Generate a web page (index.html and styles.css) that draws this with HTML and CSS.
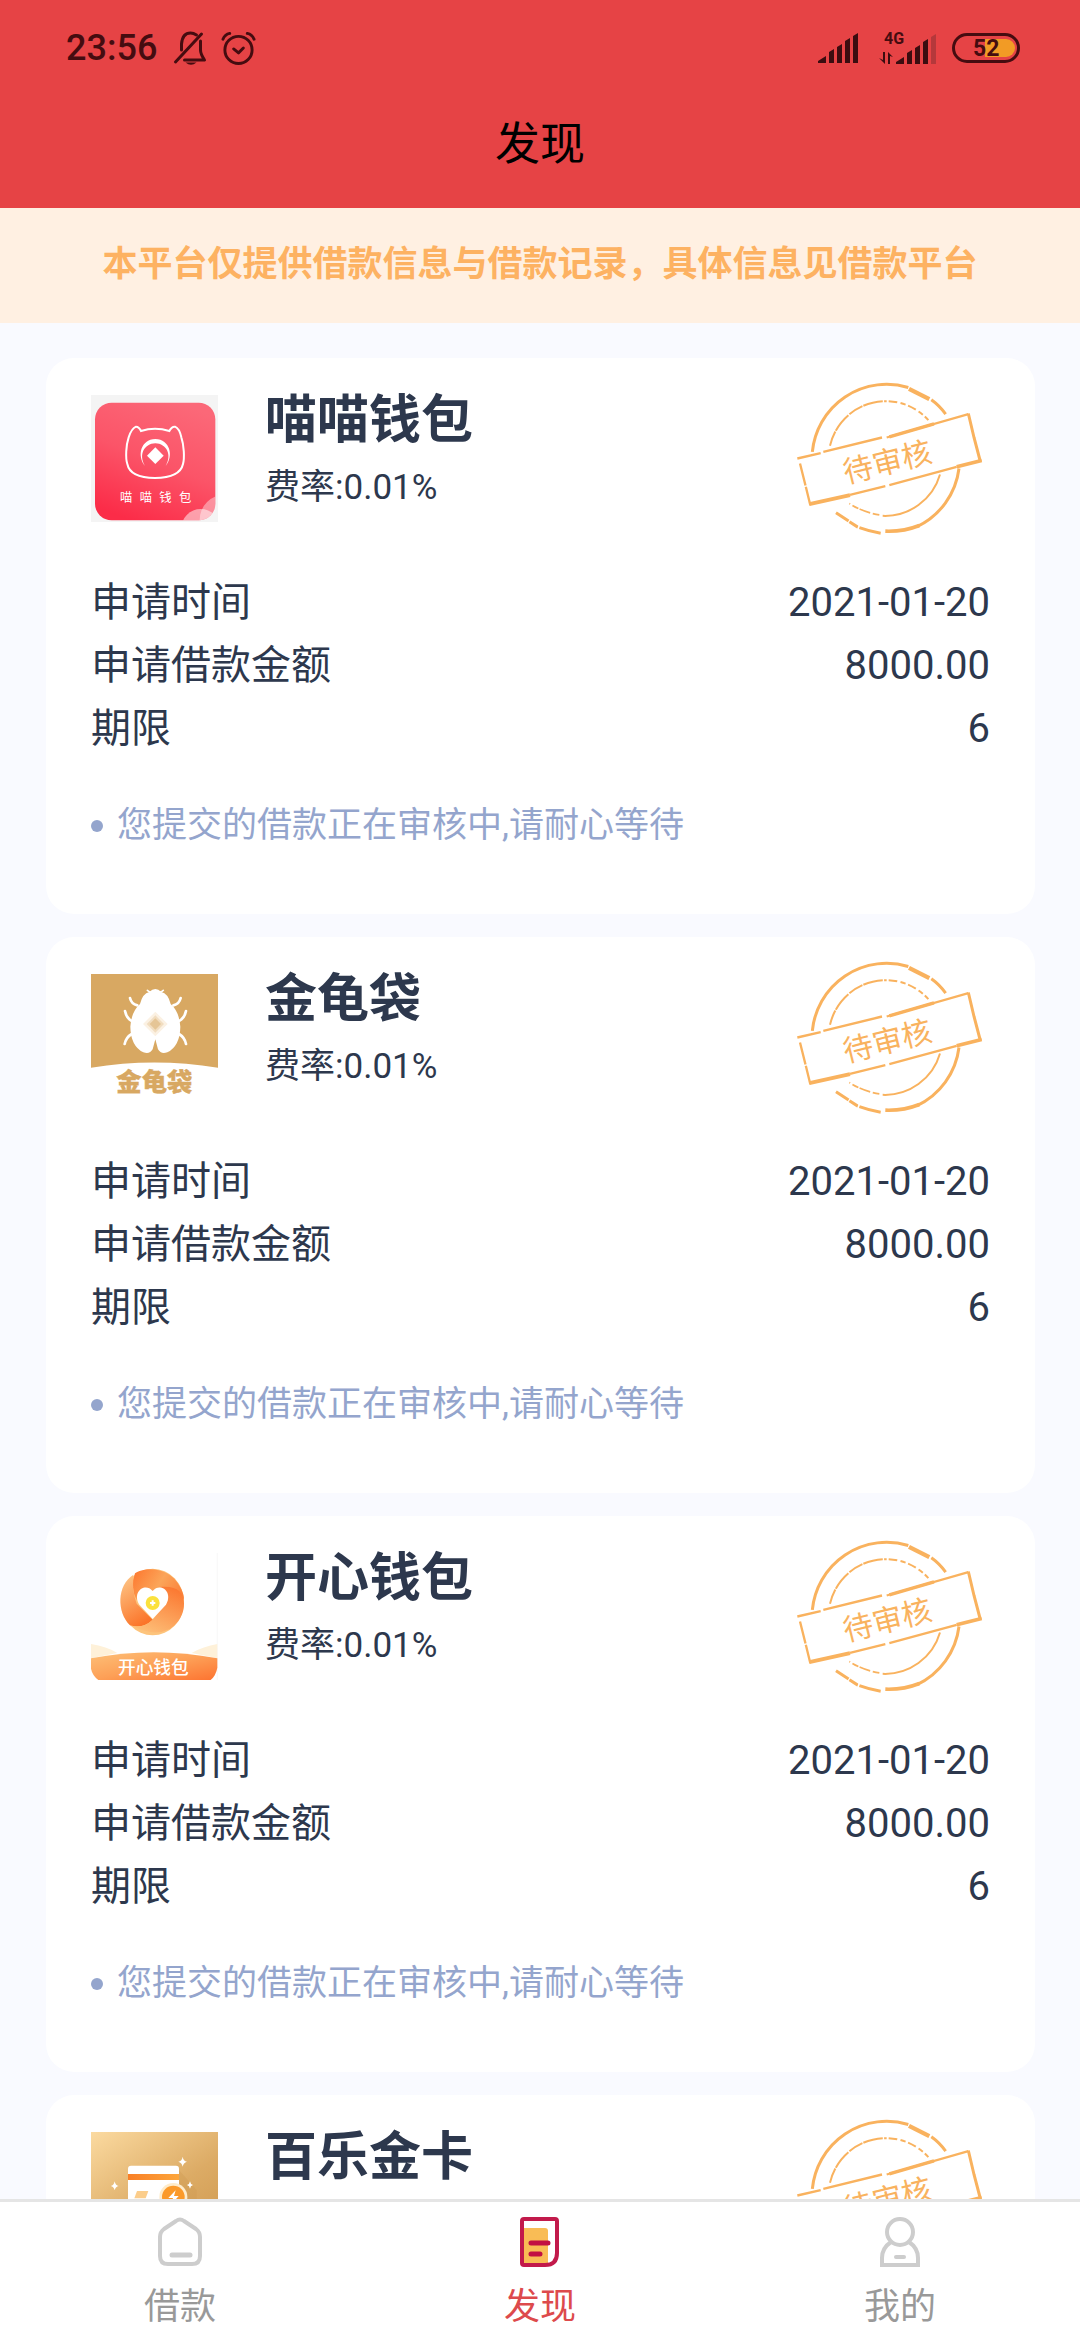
FILE: index.html
```html
<!DOCTYPE html>
<html lang="zh-CN">
<head>
<meta charset="utf-8">
<meta name="viewport" content="width=device-width, initial-scale=1">
<title>发现</title>
<link rel="stylesheet" href="styles.css">
</head>
<body>
<svg class="defs" aria-hidden="true">
  <defs>
    <g id="stamp" fill="none" stroke="#f9b25e">
      <path d="M157 305A224 224 0 0 1 445 112" stroke-width="9"/>
      <path d="M447 116L508 147" stroke-width="13"/>
      <path d="M514 149Q538 166 557 192" stroke-width="9"/>
      <path d="M597 355A224 224 0 0 1 470 530" stroke-width="9"/>
      <path d="M478 526Q430 545 376 543" stroke-width="11"/>
      <path d="M362 549Q325 543 292 530L228 488" stroke-width="9" stroke-dasharray="66 5 30 3"/>
      <path d="M210 287A172 172 0 0 1 380 153" stroke-width="6" stroke-dasharray="46 3 60 4"/>
      <path d="M386 153A172 172 0 0 1 505 210" stroke-width="6" stroke-dasharray="26 10 16 8"/>
      <path d="M540 373A172 172 0 0 1 368 497" stroke-width="6"/>
      <path d="M358 494Q310 487 268 460" stroke-width="5" stroke-dasharray="20 8 34 4"/>
      <path d="M112 325L182 309M190 305L366 262M380 262L625 192" stroke-width="7"/>
      <path d="M388 260L522 221" stroke-width="10"/>
      <path d="M625 190L642 262L661 334" stroke-width="9"/>
      <path d="M120 340L138 412L151 465" stroke-width="7" stroke-dasharray="68 4"/>
      <path d="M148 462L270 435" stroke-width="12"/>
      <path d="M270 434L376 408M388 405L590 350" stroke-width="7"/>
      <path d="M590 350L665 331" stroke-width="11"/>
    </g>
  </defs>
</svg>

<div class="app">
  <header class="topbar">
    <div class="status">
      <span class="clock">23:56</span>
      <svg class="status-icon" viewBox="0 0 34 36" aria-hidden="true">
        <g fill="none" stroke="#450c10" stroke-width="3" stroke-linecap="round" stroke-linejoin="round">
          <path d="M2 32L28 4"/>
          <path d="M8 20V14Q9 3 17 3Q20 3 23 5M27 11V20Q27 24 31 30H11"/>
        </g>
        <path d="M12 32.500H23Q17.500 37 12 32.500Z" fill="#450c10"/>
      </svg>
      <svg class="status-icon" viewBox="0 0 36 36" aria-hidden="true">
        <g fill="none" stroke="#450c10" stroke-width="3" stroke-linecap="round" stroke-linejoin="round">
          <circle cx="18" cy="20" r="14"/>
          <path d="M13 19L18 23L23 18M2 9Q4 4 9 3M27 3Q32 4 34 9"/>
        </g>
      </svg>
      <span class="spacer"></span>
      <svg class="signal" viewBox="0 0 40 32" aria-hidden="true">
        <path d="M0 31V29L8 24V31ZM11 31V20L16 17V31ZM19 31V15L24 12V31ZM27 31V9L32 6V31ZM35 31V4L40 1V31Z" fill="#3b0d10"/>
      </svg>
      <svg class="signal-data" viewBox="0 0 58 36" aria-hidden="true">
        <text x="5" y="14" class="network">4G</text>
        <path d="M0 28L4 30V22H6V34ZM9 22L14 27L11 26V34H9Z" fill="#3b0d10"/>
        <path d="M17 34V32L25 27V34ZM28 34V23L33 20V34ZM36 34V18L41 15V34ZM44 34V12L49 9V34Z" fill="#3b0d10"/>
        <path d="M52 34V7L57 4V34Z" fill="#b5383b"/>
      </svg>
      <svg class="battery" viewBox="0 0 68 30" role="img" aria-label="52%">
        <path d="M33 6H54A9 9 0 0 1 54 24H33Z" fill="#f29b25"/>
        <rect x="1.500" y="1.500" width="65" height="27" rx="13.500" fill="none" stroke="#450c10" stroke-width="3"/>
        <text x="21" y="23" class="level">52</text>
      </svg>
    </div>
    <h1 class="title">发现</h1>
  </header>

  <p class="notice">本平台仅提供借款信息与借款记录，具体信息见借款平台</p>

  <main class="list">
    <article class="card">
      <div class="head">
        <svg class="logo" viewBox="153 135 381 381" aria-hidden="true">
          <defs>
            <linearGradient id="pink" x1="0.700" y1="0" x2="0.300" y2="1">
              <stop offset="0" stop-color="#fb6878"/><stop offset="0.500" stop-color="#fb5468"/><stop offset="1" stop-color="#fb2c48"/>
            </linearGradient>
            <clipPath id="pinkClip"><rect x="165" y="158" width="361" height="353" rx="50"/></clipPath>
          </defs>
          <path d="M153 135H534V516H153Z" fill="#f4f4f4"/>
          <rect x="165" y="158" width="361" height="353" rx="50" fill="url(#pink)"/>
          <g clip-path="url(#pinkClip)" fill="#fff">
            <circle cx="555" cy="510" r="76" fill-opacity="0.400"/>
            <circle cx="482" cy="535" r="58" fill-opacity="0.500"/>
          </g>
          <path d="M303 243Q345 230 388 243Q395 229 405 230Q418 235 424 262C432 285 434 325 429 342Q420 383 345 384Q270 383 262 342C256 325 258 285 266 262Q275 235 288 230Q297 230 303 243Z" fill="none" stroke="#fff" stroke-width="6"/>
          <path d="M315 348C290 318 302 268 346 267C390 268 402 318 377 348C397 315 380 281 346 280C312 281 295 315 315 348Z" fill="#fff"/>
          <path d="M346 292L371 317L346 342L321 317Z" fill="#fff"/>
          <text x="240 299 358 417" y="456" class="logo-pink">喵喵钱包</text>
        </svg>
        <div class="info">
          <h2 class="name">喵喵钱包</h2>
          <p class="rate">费率:0.01%</p>
        </div>
        <svg class="stamp" viewBox="105 90 570 470"><use href="#stamp"/><text class="stamp-text" x="382" y="368" transform="rotate(-14 382 335)">待审核</text></svg>
      </div>
      <dl class="facts">
        <div class="fact"><dt>申请时间</dt><dd>2021-01-20</dd></div>
        <div class="fact"><dt>申请借款金额</dt><dd>8000.00</dd></div>
        <div class="fact"><dt>期限</dt><dd>6</dd></div>
      </dl>
      <p class="hint">您提交的借款正在审核中,请耐心等待</p>
    </article>

    <article class="card">
      <div class="head">
        <svg class="logo" viewBox="33 42 381 381" aria-hidden="true">
          <path d="M33 42H414V323Q223 292 33 323Z" fill="#d8a862"/>
          <g fill="none" stroke="#fff" stroke-width="8" stroke-linecap="round">
            <path d="M150 114Q154 132 172 136M302 114Q298 132 280 136M135 153Q140 178 160 185M318 153Q313 178 292 185M155 222Q138 232 134 252M297 222Q314 232 318 252"/>
            <path d="M202 91Q206 96 212 96M250 91Q246 96 240 96" stroke-width="5"/>
          </g>
          <path d="M208 96Q226 78 244 96Q264 100 272 132Q298 155 301 200Q300 258 262 277Q243 284 234 268L226 238L218 268Q209 284 190 277Q152 258 151 200Q154 155 180 132Q188 100 208 96Z" fill="#fff"/>
          <path d="M226 155L263 192L226 229L189 192Z" fill="#fbf1e3"/>
          <path d="M226 166L252 192L226 218L200 192Z" fill="#f1ddc0"/>
          <path d="M226 175L243 192L226 209L209 192Z" fill="#e5c596"/>
          <text x="109" y="393" class="logo-gold">金龟袋</text>
        </svg>
        <div class="info">
          <h2 class="name">金龟袋</h2>
          <p class="rate">费率:0.01%</p>
        </div>
        <svg class="stamp" viewBox="105 90 570 470"><use href="#stamp"/><text class="stamp-text" x="382" y="368" transform="rotate(-14 382 335)">待审核</text></svg>
      </div>
      <dl class="facts">
        <div class="fact"><dt>申请时间</dt><dd>2021-01-20</dd></div>
        <div class="fact"><dt>申请借款金额</dt><dd>8000.00</dd></div>
        <div class="fact"><dt>期限</dt><dd>6</dd></div>
      </dl>
      <p class="hint">您提交的借款正在审核中,请耐心等待</p>
    </article>

    <article class="card">
      <div class="head">
        <svg class="logo" viewBox="33 38 381 381" aria-hidden="true">
          <defs>
            <linearGradient id="swirlTop" x1="0" y1="0.300" x2="1" y2="0.700">
              <stop offset="0" stop-color="#fd7e35"/><stop offset="0.500" stop-color="#fba559"/><stop offset="1" stop-color="#fb813a"/>
            </linearGradient>
            <linearGradient id="swirlLeft" x1="0.200" y1="0" x2="0.600" y2="1">
              <stop offset="0" stop-color="#fdc586"/><stop offset="1" stop-color="#fb7429"/>
            </linearGradient>
            <linearGradient id="swirlRight" x1="0.800" y1="0" x2="0.300" y2="1">
              <stop offset="0" stop-color="#fb7730"/><stop offset="1" stop-color="#fdbd76"/>
            </linearGradient>
            <linearGradient id="hill" x1="0" y1="0" x2="1" y2="1">
              <stop offset="0" stop-color="#fdc078"/><stop offset="0.500" stop-color="#fda057"/><stop offset="1" stop-color="#fd7330"/>
            </linearGradient>
          </defs>
          <path d="M412 38V419" stroke="#f4f4f4" stroke-width="2"/>
          <ellipse cx="218" cy="185" rx="94" ry="100" fill="#fdc47c"/>
          <path d="M165 99C190 80 270 76 301 141Q312 160 312 180C300 140 240 135 218 155Q170 130 170 180Q150 140 165 99Z" fill="url(#swirlTop)"/>
          <path d="M160 103C110 135 110 215 150 255Q190 265 218 238L170 190Q155 150 160 103Z" fill="url(#swirlLeft)"/>
          <path d="M240 140C290 135 312 155 312 190Q312 235 270 266Q220 290 160 258Q195 262 218 238L264 180Z" fill="url(#swirlRight)"/>
          <path d="M218 236L178 193C155 155 195 125 218 152C241 125 281 155 258 193Z" fill="#fff"/>
          <circle cx="218" cy="188" r="21" fill="#fbe13c"/>
          <path d="M218 180V196M210 188H226" stroke="#fff" stroke-width="6"/>
          <path d="M33 311Q80 318 112 338L33 354ZM412 311Q370 318 335 338L412 354Z" fill="#fef1d9"/>
          <path d="M33 354Q220 317 412 354V382Q408 405 392 419H55Q37 405 33 385Z" fill="url(#hill)"/>
          <text x="114" y="401" class="logo-happy">开心钱包</text>
        </svg>
        <div class="info">
          <h2 class="name">开心钱包</h2>
          <p class="rate">费率:0.01%</p>
        </div>
        <svg class="stamp" viewBox="105 90 570 470"><use href="#stamp"/><text class="stamp-text" x="382" y="368" transform="rotate(-14 382 335)">待审核</text></svg>
      </div>
      <dl class="facts">
        <div class="fact"><dt>申请时间</dt><dd>2021-01-20</dd></div>
        <div class="fact"><dt>申请借款金额</dt><dd>8000.00</dd></div>
        <div class="fact"><dt>期限</dt><dd>6</dd></div>
      </dl>
      <p class="hint">您提交的借款正在审核中,请耐心等待</p>
    </article>

    <article class="card">
      <div class="head">
        <svg class="logo" viewBox="153 156 381 381" aria-hidden="true">
          <defs>
            <linearGradient id="sand" x1="0" y1="0" x2="0.700" y2="1">
              <stop offset="0" stop-color="#fbdaa0"/><stop offset="0.600" stop-color="#dcab65"/><stop offset="1" stop-color="#d09a50"/>
            </linearGradient>
            <linearGradient id="strip" x1="0" y1="0" x2="1" y2="0">
              <stop offset="0" stop-color="#f97f26"/><stop offset="1" stop-color="#fda63b"/>
            </linearGradient>
          </defs>
          <path d="M153 156H534V537H153Z" fill="url(#sand)"/>
          <path d="M417 270L470 330V440H300L264 420Z" fill="#cf9a52" fill-opacity="0.400"/>
          <rect x="264" y="257" width="153" height="160" rx="9" fill="#fff"/>
          <path d="M264 282H417V300H264Z" fill="url(#strip)"/>
          <path d="M291 333H325L317 355H283Z" fill="#fbcd8b"/>
          <circle cx="400" cy="351" r="42" fill="#feeccb"/>
          <circle cx="400" cy="351" r="34" fill="#fb9a2a"/>
          <path d="M407 331L385 354H399L393 374L416 348H402Z" fill="#fff"/>
          <path d="M428 230Q430 243 441 245Q430 248 428 260Q426 248 415 245Q426 243 428 230ZM224 304Q226 316 236 318Q226 320 224 331Q222 320 212 318Q222 316 224 304ZM450 304Q451 313 459 315Q451 317 450 326Q449 317 441 315Q449 313 450 304Z" fill="#fff"/>
        </svg>
        <div class="info">
          <h2 class="name">百乐金卡</h2>
          <p class="rate">费率:0.01%</p>
        </div>
        <svg class="stamp" viewBox="105 90 570 470"><use href="#stamp"/><text class="stamp-text" x="382" y="368" transform="rotate(-14 382 335)">待审核</text></svg>
      </div>
    </article>
  </main>

  <nav class="tabs">
    <a class="tab" href="#loan">
      <svg class="tab-icon" viewBox="0 0 52 52" aria-hidden="true">
        <path d="M22 5Q26 2 30 5L42 13Q46 16 46 21V40Q46 48 38 48H14Q6 48 6 40V21Q6 16 10 13Z" fill="none" stroke="#cdcdcd" stroke-width="4"/>
        <path d="M18 39H36" stroke="#cdcdcd" stroke-width="5" stroke-linecap="round"/>
      </svg>
      借款
    </a>
    <a class="tab active" href="#discover" aria-current="page">
      <svg class="tab-icon" viewBox="0 0 52 52" aria-hidden="true">
        <path d="M10 12H31Q34 12 34 15V47H10Z" fill="#f9bc55"/>
        <path d="M10 3H41Q43 3 43 5V37Q43 49 31 49H10Q8 49 8 47V5Q8 3 10 3Z" fill="none" stroke="#c21a4b" stroke-width="4"/>
        <path d="M17 27H34M17 38H26" stroke="#c21042" stroke-width="5" stroke-linecap="round"/>
      </svg>
      发现
    </a>
    <a class="tab" href="#mine">
      <svg class="tab-icon" viewBox="0 0 52 52" aria-hidden="true">
        <g fill="none" stroke="#cdcdcd" stroke-width="4">
          <circle cx="26" cy="16" r="13"/>
          <path d="M17 26Q8 32 8 42V49H44V42Q44 32 35 26"/>
        </g>
        <path d="M22 41H30" stroke="#cdcdcd" stroke-width="4" stroke-linecap="round"/>
      </svg>
      我的
    </a>
  </nav>
</div>
</body>
</html>
```
FILE: styles.css
```css
* {
  box-sizing: border-box;
  margin: 0;
  padding: 0;
}

body {
  font-family: Roboto, "Noto Sans CJK SC", sans-serif;
  color: #2d384d;
  background: #f9faff;
}

.defs {
  display: block;
  width: 0;
  height: 0;
}

.app {
  display: flex;
  flex-direction: column;
  height: 100vh;
}

.topbar {
  flex: none;
  background: #e64345;
}

.status {
  display: flex;
  align-items: center;
  height: 96px;
  padding: 0 60px 0 66px;
}

.clock {
  margin-right: 16px;
  font-size: 36px;
  font-weight: 500;
  line-height: 40px;
  color: #450c10;
}

.status-icon {
  width: 35px;
  height: 36px;
  margin-right: 13px;
}

.spacer {
  flex: 1;
}

.signal {
  width: 40px;
  height: 32px;
  margin-right: 21px;
}

.signal-data {
  width: 58px;
  height: 36px;
  margin-right: 15px;
}

.network {
  font-size: 16px;
  font-weight: 700;
  fill: #450c10;
}

.battery {
  width: 68px;
  height: 30px;
}

.level {
  font-size: 23px;
  font-weight: 700;
  fill: #450c10;
}

.title {
  height: 112px;
  font-size: 45px;
  font-weight: 400;
  line-height: 98px;
  text-align: center;
  color: #000;
}

.notice {
  flex: none;
  padding: 32px 0 33px;
  font-size: 35px;
  font-weight: 700;
  line-height: 50px;
  text-align: center;
  white-space: nowrap;
  color: #fdb262;
  background: #fff0e2;
}

.list {
  display: flex;
  flex: 1;
  flex-direction: column;
  gap: 23px;
  min-height: 0;
  padding: 35px 45px 35px 46px;
  overflow-y: auto;
  scrollbar-width: none;
}

.card {
  flex: none;
  padding: 22px 45px 63px;
  background: #fff;
  border-radius: 28px;
}

.head {
  display: flex;
  align-items: flex-start;
  height: 191px;
}

.logo {
  width: 127px;
  height: 127px;
  margin-top: 15px;
}

.info {
  flex: 1;
  padding: 11px 0 0 47px;
}

.name {
  font-size: 52px;
  font-weight: 700;
  line-height: 60px;
}

.rate {
  margin-top: 12px;
  font-size: 35px;
  line-height: 50px;
}

.stamp {
  width: 190px;
  height: 157px;
  margin-right: 5px;
}

.stamp-text {
  font-size: 90px;
  text-anchor: middle;
  fill: #f9b25e;
}

.logo-pink {
  font-size: 37px;
  fill: #fff;
}

.logo-gold {
  font-size: 76px;
  font-weight: 900;
  fill: #d8a862;
  stroke: #d8a862;
  stroke-width: 1px;
}

.logo-happy {
  font-size: 53px;
  font-weight: 500;
  fill: #fff;
}

.fact {
  display: flex;
  justify-content: space-between;
  font-size: 40px;
  line-height: 63px;
}

.hint {
  display: flex;
  align-items: center;
  margin-top: 41px;
  font-size: 35px;
  line-height: 50px;
  color: #94a5cd;
}

.hint::before {
  width: 12px;
  height: 12px;
  margin-right: 14px;
  content: "";
  background: #94a5cd;
  border-radius: 50%;
}

.tabs {
  display: flex;
  flex: none;
  height: 141px;
  border-top: 3px solid #e5e5e5;
  background: #fff;
}

.tab {
  display: flex;
  flex: 1;
  flex-direction: column;
  align-items: center;
  gap: 14px;
  padding-top: 14px;
  font-size: 36px;
  line-height: 50px;
  color: #999;
  text-decoration: none;
}

.tab-icon {
  width: 52px;
  height: 52px;
}

.active {
  color: #dd4a4c;
}
```
